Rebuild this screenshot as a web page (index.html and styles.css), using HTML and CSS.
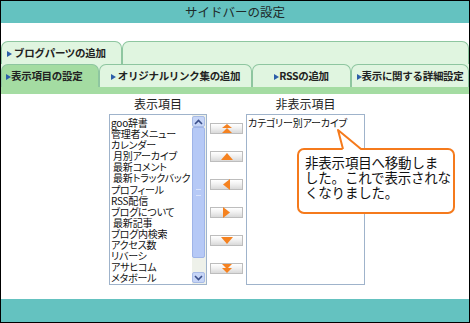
FILE: index.html
```html
<!doctype html>
<html>
<head>
<meta charset="utf-8">
<title>サイドバーの設定</title>
<link rel="stylesheet" href="styles.css">
</head>
<body>
<div class="frame">
	<div class="title">サイドバーの設定</div>
	<div class="tabs">
		<div class="tab-row top">
			<div class="tab t-parts"><span class="tri"></span> ブログパーツの追加</div>
			<div class="tab t-blank"></div>
		</div>
		<div class="tab-row bottom">
			<div class="tab t-items active"><span class="tri"></span>表示項目の設定</div>
			<div class="tab t-links"><span class="tri"></span> オリジナルリンク集の追加</div>
			<div class="tab t-rss"><span class="tri"></span>RSSの追加</div>
			<div class="tab t-detail"><span class="tri"></span>表示に関する詳細設定</div>
		</div>
	</div>
	<div class="strip"></div>

	<div class="panel">
		<div class="col col-show">
			<div class="label">表示項目</div>
			<div class="listbox">
				<ul class="items">
					<li>goo辞書</li>
					<li>管理者メニュー</li>
					<li>カレンダー</li>
					<li>&nbsp;月別アーカイブ</li>
					<li>&nbsp;最新コメント</li>
					<li>&nbsp;最新トラックバック</li>
					<li>プロフィール</li>
					<li>RSS配信</li>
					<li>ブログについて</li>
					<li>&nbsp;最新記事</li>
					<li>ブログ内検索</li>
					<li>アクセス数</li>
					<li>リバーシ</li>
					<li>アサヒコム</li>
					<li>メタボール</li>
				</ul>
				<div class="scroll">
					<div class="sb-btn">
						<svg width="9" height="6" viewBox="0 0 9 6"><polyline points="1,5 4.5,1.5 8,5" fill="none" stroke="#3b4f8a" stroke-width="1.6"/></svg>
					</div>
					<div class="sb-thumb"><span class="grip"></span></div>
					<div class="sb-track"></div>
					<div class="sb-btn">
						<svg width="9" height="6" viewBox="0 0 9 6"><polyline points="1,1 4.5,4.5 8,1" fill="none" stroke="#3b4f8a" stroke-width="1.6"/></svg>
					</div>
				</div>
			</div>
		</div>

		<div class="buttons">
			<div class="mv"><svg width="12" height="9" viewBox="0 0 12 9"><polygon points="6,0 11,4 1,4" fill="#f58220"/><polygon points="6,4 11,9 1,9" fill="#f58220"/></svg></div>
			<div class="mv"><svg width="12" height="7" viewBox="0 0 12 7"><polygon points="6,0 12,7 0,7" fill="#f58220"/></svg></div>
			<div class="mv"><svg width="7" height="11" viewBox="0 0 7 11"><polygon points="0,5.5 7,0 7,11" fill="#f58220"/></svg></div>
			<div class="mv"><svg width="7" height="11" viewBox="0 0 7 11"><polygon points="7,5.5 0,0 0,11" fill="#f58220"/></svg></div>
			<div class="mv"><svg width="12" height="7" viewBox="0 0 12 7"><polygon points="0,0 12,0 6,7" fill="#f58220"/></svg></div>
			<div class="mv"><svg width="12" height="9" viewBox="0 0 12 9"><polygon points="1,0 11,0 6,5" fill="#f58220"/><polygon points="1,4 11,4 6,9" fill="#f58220"/></svg></div>
		</div>

		<div class="col col-hide">
			<div class="label">非表示項目</div>
			<div class="listbox">
				<ul class="items">
					<li>カテゴリー別アーカイブ</li>
				</ul>
			</div>
		</div>
	</div>

	<svg class="tail" width="30" height="25" viewBox="0 0 30 25">
		<polygon points="3,3 8,24 27,24" fill="#fff"/>
		<polyline points="8,22 3,3 26,22" fill="none" stroke="#f57a1c" stroke-width="2" stroke-linejoin="round"/>
	</svg>
	<div class="callout">
		<div class="line">非表示項目へ移動しま</div>
		<div class="line">した。これで表示されな</div>
		<div class="line">くなりました。</div>
	</div>

	<div class="footer"></div>
</div>
</body>
</html>
```

FILE: styles.css
```css
/* サイドバーの設定 画面 */
html,body{
	margin:0;
	padding:0;
	background:#fff;
}
.frame{
	width:468px;
	height:321px;
	border:1px solid #000;
	position:relative;
	display:flex;
	flex-direction:column;
	font-family:"Noto Sans CJK JP","Liberation Sans",sans-serif;
	color:#222;
	overflow:hidden;
}
.title{
	height:22px;
	line-height:22px;
	background:#64c2c0;
	text-align:center;
	font-size:12.5px;
	color:#1e2a2a;
}
.tabs{
	margin-top:18px;
}
.tab-row{
	display:flex;
	height:23px;
}
.tab-row.bottom{
	background:#dff5df;
}
.tab{
	box-sizing:border-box;
	height:23px;
	line-height:22px;
	background:#e0f5e0;
	border:1px solid #8ec6a0;
	border-bottom:none;
	border-radius:7px 7px 0 0;
	font-size:10.5px;
	font-weight:bold;
	color:#222;
	white-space:nowrap;
	letter-spacing:-0.3px;
}
.tab .tri{
	display:inline-block;
	width:0;
	height:0;
	border-left:5px solid #2c5ea8;
	border-top:3.5px solid transparent;
	border-bottom:3.5px solid transparent;
	vertical-align:0;
}
.t-parts{
	width:121px;
	padding-left:5px;
}
.t-blank{
	width:347px;
}
.tab-row.bottom .tab{
	text-align:center;
}
.t-items{
	width:98px;
}
.t-items.active{
	background:#a4dca2;
	text-align:left !important;
	padding-left:4px;
}
.t-links{
	width:153px;
}
.t-rss{
	width:99px;
}
.t-detail{
	width:118px;
}
.strip{
	height:7px;
	background:#a4dca2;
}

/* 表示項目 / 非表示項目 */
.panel{
	display:flex;
	margin-left:108px;
}
.col{
	display:flex;
	flex-direction:column;
}
.col-show{
	width:98px;
}
.col-hide{
	width:119px;
	margin-left:3px;
}
.label{
	height:20px;
	line-height:19px;
	text-align:center;
	font-size:12px;
	color:#222;
}
.listbox{
	box-sizing:border-box;
	height:171px;
	border:1px solid #9fb3cb;
	background:#fff;
	display:flex;
	overflow:hidden;
}
.items{
	list-style:none;
	margin:0;
	padding:2px 0 0 1px;
	flex:1;
	font-size:10px;
	line-height:11.1px;
	font-feature-settings:"palt";
	letter-spacing:-0.2px;
	color:#111;
	white-space:nowrap;
	overflow:hidden;
}
.items li{
	height:11.1px;
}
.scroll{
	width:13px;
	display:flex;
	flex-direction:column;
	background:#eef1ea;
	padding:1px 1px 1px 0;
}
.sb-btn{
	height:11px;
	background:#c6d5f7;
	border:1px solid #a8bbe6;
	border-radius:2px;
	box-sizing:border-box;
	display:flex;
	align-items:center;
	justify-content:center;
}
.sb-thumb{
	height:131px;
	background:#b6c9f6;
	border:1px solid #9fb4e8;
	border-radius:2px;
	box-sizing:border-box;
	display:flex;
	align-items:center;
	justify-content:center;
}
.grip{
	width:5px;
	height:5px;
	border-top:1px solid #d9e3fb;
	border-bottom:1px solid #d9e3fb;
}
.sb-track{
	flex:1;
}

.buttons{
	width:33px;
	margin-left:3px;
	padding-top:29px;
	display:flex;
	flex-direction:column;
	gap:17px;
}
.mv{
	box-sizing:border-box;
	width:33px;
	height:11px;
	border:1px solid #bdbdbd;
	background:linear-gradient(#ffffff,#f1f1f1 45%,#d9d9d9);
	display:flex;
	align-items:center;
	justify-content:center;
}

/* 吹き出し */
.callout{
	position:absolute;
	left:296px;
	top:147px;
	width:158px;
	height:66px;
	box-sizing:border-box;
	border:2px solid #f57a1c;
	border-radius:7px;
	background:#fff;
	padding:5px 2px 0 6px;
	font-size:13.5px;
	line-height:15px;
	color:#111;
	white-space:nowrap;
	letter-spacing:-0.2px;
}
.callout .line{
	height:15px;
}
.tail{
	position:absolute;
	left:334px;
	top:126px;
	z-index:2;
}
.footer{
	margin-top:auto;
	height:23px;
	background:#64c2c0;
}
```
